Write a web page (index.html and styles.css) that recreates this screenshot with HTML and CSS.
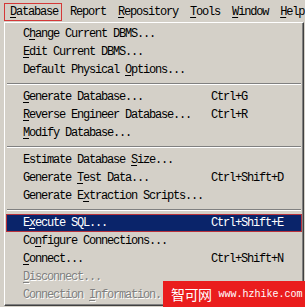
FILE: index.html
```html
<!DOCTYPE html>
<html lang="en">
<head>
  <meta charset="UTF-8">
  <title>Database Menu</title>
  <link rel="stylesheet" href="styles.css">
</head>
<body>
  <div class="menubar">
    <span class="menu-title active"><u>D</u>atabase</span>
    <span class="menu-title">Report</span>
    <span class="menu-title"><u>R</u>epository</span>
    <span class="menu-title"><u>T</u>ools</span>
    <span class="menu-title"><u>W</u>indow</span>
    <span class="menu-title"><u>H</u>elp</span>
  </div>

  <div class="dropdown">
    <div class="item"><span class="label">C<u>h</u>ange Current DBMS...</span></div>
    <div class="item"><span class="label"><u>E</u>dit Current DBMS...</span></div>
    <div class="item"><span class="label">Default Physical <u>O</u>ptions...</span></div>
    <div class="separator"></div>
    <div class="item"><span class="label"><u>G</u>enerate Database...</span><span class="shortcut">Ctrl+G</span></div>
    <div class="item"><span class="label"><u>R</u>everse Engineer Database...</span><span class="shortcut">Ctrl+R</span></div>
    <div class="item"><span class="label"><u>M</u>odify Database...</span></div>
    <div class="separator"></div>
    <div class="item"><span class="label">Estimate Database <u>S</u>ize...</span></div>
    <div class="item"><span class="label">Generate <u>T</u>est Data...</span><span class="shortcut">Ctrl+Shift+D</span></div>
    <div class="item"><span class="label">Generate E<u>x</u>traction Scripts...</span></div>
    <div class="separator"></div>
    <div class="item selected"><span class="label">E<u>x</u>ecute SQL...</span><span class="shortcut">Ctrl+Shift+E</span></div>
    <div class="item"><span class="label">Co<u>n</u>figure Connections...</span></div>
    <div class="item"><span class="label"><u>C</u>onnect...</span><span class="shortcut">Ctrl+Shift+N</span></div>
    <div class="item disabled"><span class="label"><u>D</u>isconnect...</span></div>
    <div class="item disabled"><span class="label">Connection <u>I</u>nformation...</span></div>
  </div>

  <div class="watermark">
    <span class="wm-name">智可网</span>
    <span class="wm-url">www.hzhike.com</span>
  </div>
</body>
</html>
```

FILE: styles.css
```css
* {
  margin: 0;
  padding: 0;
  box-sizing: border-box;
}

body {
  width: 305px;
  height: 307px;
  overflow: hidden;
  position: relative;
  background-color: #d4d0c8;
  font-family: 'Liberation Mono', 'DejaVu Sans Mono', monospace;
  font-size: 12px;
  letter-spacing: -1.2px;
  color: #000;
}

u {
  text-decoration: underline;
  text-underline-offset: 2px;
}

/* top menu bar */
.menubar {
  height: 22px;
  padding: 3px 0 0 4px;
  display: flex;
  align-items: flex-start;
  gap: 2px;
}

.menu-title {
  height: 18px;
  line-height: 16px;
  padding: 0 3px 0 5px;
  border: 1px solid transparent;
  white-space: pre;
  flex-shrink: 0;
}

.menu-title.active {
  border-color: #d43838;
}

/* dropdown */
.dropdown {
  margin-left: 4px;
  width: 300px;
  padding: 2px 1px 1px;
  border: 1px solid;
  border-color: #ffffff #404040 #404040 #ffffff;
  box-shadow: inset -1px -1px 0 #808080;
}

.item {
  height: 18px;
  line-height: 18px;
  display: grid;
  grid-template-columns: 205px 1fr;
  white-space: pre;
}

.item .label {
  padding-left: 17px;
}

.item.selected {
  background-color: #0a246a;
  color: #fff;
  box-shadow: inset 0 0 0 1px #b8323c;
}

.item.disabled {
  color: #808080;
  text-shadow: 1px 1px 0 #ffffff;
}

.separator {
  height: 2px;
  margin: 4px 1px 3px;
  border-top: 1px solid #808080;
  border-bottom: 1px solid #ffffff;
}

/* site watermark over the corner */
.watermark {
  position: absolute;
  right: 0;
  bottom: 0;
  width: 142px;
  height: 26px;
  background-color: #ea1d1d;
  color: #fff;
  display: flex;
  align-items: center;
  gap: 7px;
  padding-left: 8px;
  white-space: nowrap;
}

.wm-name {
  font-family: 'Noto Sans CJK SC', sans-serif;
  font-size: 14px;
  letter-spacing: -0.5px;
  flex-shrink: 0;
}

.wm-url {
  font-size: 10px;
  letter-spacing: 0;
  flex-shrink: 0;
}
```
